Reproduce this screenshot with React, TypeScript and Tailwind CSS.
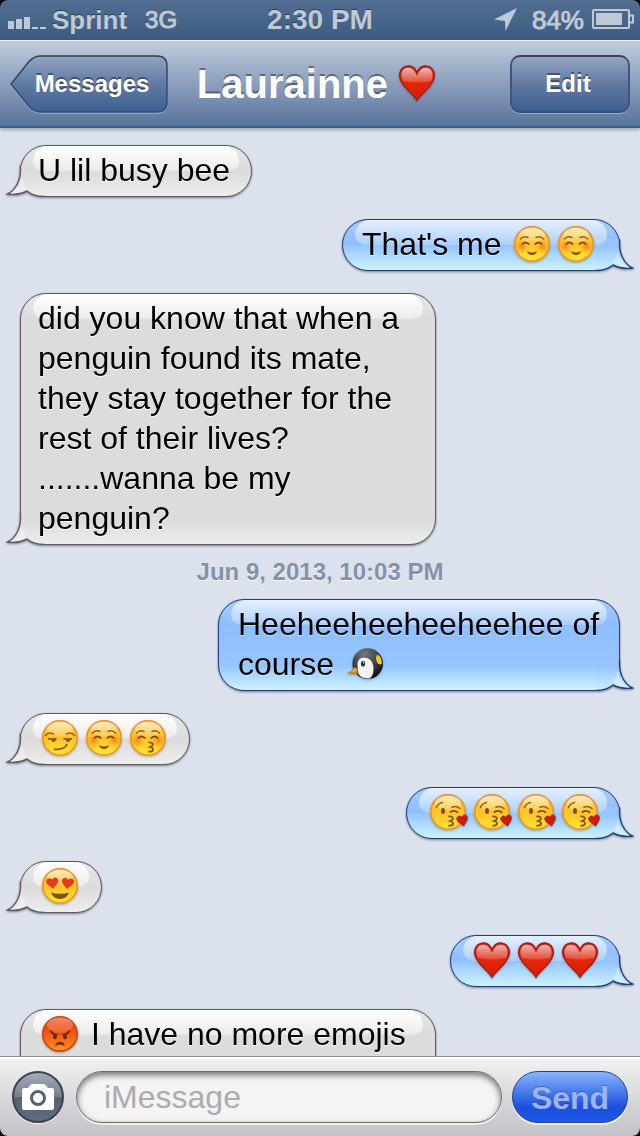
import type { ReactNode } from 'react';
import { clsx } from 'clsx';

type EmojiName = 'blush' | 'smirk' | 'kissing' | 'kissHeart' | 'heartEyes' | 'angry' | 'penguin' | 'heart';

type Message = {
  id: number;
  from: 'me' | 'them';
  size?: string;
  parts: (string | { emoji: EmojiName })[];
};

const e = (emoji: EmojiName) => ({ emoji });

const earlier: Message[] = [
  { id: 1, from: 'them', size: 'w-[232px]', parts: ['U lil busy bee'] },
  { id: 2, from: 'me', size: 'w-[278px]', parts: ["That's me ", e('blush'), e('blush')] },
  {
    id: 3,
    from: 'them',
    size: 'w-[416px]',
    parts: [
      'did you know that when a penguin found its mate, they stay together for the rest of their lives?\n.......wanna be my penguin?',
    ],
  },
];

const later: Message[] = [
  { id: 4, from: 'me', size: 'w-[402px]', parts: ['Heeheeheeheeheehee of course ', e('penguin')] },
  { id: 5, from: 'them', parts: [e('smirk'), e('blush'), e('kissing')] },
  { id: 6, from: 'me', parts: [e('kissHeart'), e('kissHeart'), e('kissHeart'), e('kissHeart')] },
  { id: 7, from: 'them', parts: [e('heartEyes')] },
  { id: 8, from: 'me', parts: [e('heart'), e('heart'), e('heart')] },
  { id: 9, from: 'them', size: 'w-[416px] min-h-[92px]', parts: [e('angry'), ' I have no more emojis'] },
];

const emojiLabels: Record<EmojiName, string> = {
  blush: 'smiling face',
  smirk: 'smirking face',
  kissing: 'kissing face with closed eyes',
  kissHeart: 'face blowing a kiss',
  heartEyes: 'smiling face with heart eyes',
  angry: 'angry face',
  penguin: 'penguin',
  heart: 'red heart',
};

const HEART =
  'M18 35.5C14.500 29 .5 20 .5 10C.5 4.500 4.500 .8 9.500 .8C13.500 .8 16.500 3.500 18 7.500C19.500 3.500 22.500 .8 26.500 .8C31.500 .8 35.500 4.500 35.500 10C35.500 20 21.500 29 18 35.500Z';

// gradients shared by every emoji and bubble tail
function SharedDefs() {
  return (
    <svg className="absolute size-0" aria-hidden="true">
      <defs>
        <linearGradient id="face" x1="0" y1="0" x2="0" y2="1">
          <stop offset="0" stopColor="#ffcf58" />
          <stop offset="0.5" stopColor="#ffc02a" />
          <stop offset="0.75" stopColor="#ffd52a" />
          <stop offset="1" stopColor="#ffe640" />
        </linearGradient>
        <linearGradient id="rim" x1="0" y1="0" x2="0" y2="1">
          <stop offset="0" stopColor="#f48a1e" />
          <stop offset="1" stopColor="#ef9d1e" />
        </linearGradient>
        <linearGradient id="angryFace" x1="0" y1="0" x2="0" y2="1">
          <stop offset="0" stopColor="#e5360c" />
          <stop offset="0.5" stopColor="#f4560f" />
          <stop offset="1" stopColor="#ff9a24" />
        </linearGradient>
        <linearGradient id="shine" x1="0" y1="0" x2="0" y2="1">
          <stop offset="0" stopColor="#fff" stopOpacity="0.8" />
          <stop offset="1" stopColor="#fff" stopOpacity="0.2" />
        </linearGradient>
        <radialGradient id="cheek">
          <stop offset="0" stopColor="#ff7a1a" stopOpacity="0.9" />
          <stop offset="1" stopColor="#ff8a1a" stopOpacity="0" />
        </radialGradient>
        <linearGradient id="heartFill" x1="0" y1="0" x2="0" y2="1">
          <stop offset="0" stopColor="#c4200f" />
          <stop offset="0.5" stopColor="#e52508" />
          <stop offset="1" stopColor="#d41c06" />
        </linearGradient>
        <radialGradient id="penguinHead" cx="0.4" cy="0.2" r="0.8">
          <stop offset="0" stopColor="#747a7e" />
          <stop offset="0.6" stopColor="#383d40" />
          <stop offset="1" stopColor="#0c0e10" />
        </radialGradient>
        <linearGradient id="tailThem" x1="0" y1="0" x2="0" y2="1">
          <stop offset="0.25" stopColor="#dcdcdc" />
          <stop offset="1" stopColor="#ededed" />
        </linearGradient>
        <linearGradient id="tailMe" x1="0" y1="0" x2="0" y2="1">
          <stop offset="0.25" stopColor="#97c5ff" />
          <stop offset="1" stopColor="#ccf3ff" />
        </linearGradient>
      </defs>
    </svg>
  );
}

function Face({ children, angry = false }: { children: ReactNode; angry?: boolean }) {
  return (
    <>
      <circle cx="18" cy="18" r="17.2" fill={angry ? 'url(#angryFace)' : 'url(#face)'} stroke={angry ? '#cf4710' : 'url(#rim)'} strokeWidth="1.7" />
      <ellipse cx="18" cy="9" rx="13" ry="7.5" fill="url(#shine)" opacity={angry ? 0.5 : 0.75} />
      {children}
    </>
  );
}

function ClosedEyes() {
  return (
    <>
      <circle cx="7.5" cy="20.5" r="6.5" fill="url(#cheek)" />
      <circle cx="28.5" cy="20.5" r="6.5" fill="url(#cheek)" />
      <path d="M6.5 13Q9.5 9.5 14 11.5M29.5 13Q26.5 9.5 22 11.5" className="fill-none stroke-[#91601a]" strokeWidth="1.5" strokeLinecap="round" />
      <path d="M8.3 18Q11.5 15 14.7 18M21.3 18Q24.5 15 27.7 18" className="fill-none stroke-[#7d4f12]" strokeWidth="1.8" strokeLinecap="round" />
    </>
  );
}

const kissMouth = (
  <path d="M19 22.3C24 22.3 24 25.500 20 27C24.500 28 24 31.800 19 31.700" className="fill-none stroke-[#8a500c]" strokeWidth="1.7" strokeLinecap="round" />
);

function EmojiShape({ name }: { name: EmojiName }) {
  switch (name) {
    case 'blush':
      return (
        <Face>
          <ClosedEyes />
          <path d="M13 25Q18 28.2 23 25Q22 29 18 29Q14 29 13 25Z" fill="#8a4a08" />
        </Face>
      );
    case 'smirk':
      return (
        <Face>
          <path d="M3.5 15.5Q6.5 11.5 11.5 14M32.5 15.5Q29.5 11.5 24.5 14" className="fill-none stroke-[#91601a]" strokeWidth="1.6" strokeLinecap="round" />
          <path d="M6.5 18.8Q10 19.5 14 18.8M22 18.8Q26 19.5 29.5 18.8" className="fill-none stroke-[#7d4f12]" strokeWidth="1.5" strokeLinecap="round" />
          <path d="M9.5 19H14Q13.5 22 11.5 22Q9.5 22 9.5 19ZM24 19H28.5Q28 22 26 22Q24 22 24 19Z" fill="#7d4f12" />
          <path d="M12.5 29.3Q22.5 30 24.8 24.5" className="fill-none stroke-[#8a500c]" strokeWidth="1.8" strokeLinecap="round" />
        </Face>
      );
    case 'kissing':
      return (
        <Face>
          <ClosedEyes />
          {kissMouth}
        </Face>
      );
    case 'kissHeart':
      return (
        <Face>
          <path d="M6.5 13.5Q8 9.5 12.5 8.5M22 13.3Q26 11.3 30 14.5" className="fill-none stroke-[#91601a]" strokeWidth="1.6" strokeLinecap="round" />
          <ellipse cx="13" cy="17" rx="2" ry="3" fill="#7d4f12" />
          <path d="M20.5 18Q24 15.5 27.5 18.3" className="fill-none stroke-[#7d4f12]" strokeWidth="1.8" strokeLinecap="round" />
          {kissMouth}
          <path d={HEART} transform="translate(26 22.5) rotate(-12) scale(.31)" fill="#cc1c12" stroke="#96100a" strokeWidth="2" />
        </Face>
      );
    case 'heartEyes':
      return (
        <Face>
          <path d={HEART} transform="translate(4 11) rotate(-8) scale(.33 .29)" fill="#e63c1e" stroke="#c0300e" strokeWidth="2" />
          <path d={HEART} transform="translate(20.5 9.5) rotate(8) scale(.33 .29)" fill="#e63c1e" stroke="#c0300e" strokeWidth="2" />
          <path d="M9 24.5Q18 27 27 24.5Q25 31 18 31Q11 31 9 24.5Z" fill="#87500c" />
        </Face>
      );
    case 'angry':
      return (
        <Face angry>
          <path d="M8.5 15Q10.5 18.5 15.5 18.5M27.5 15Q25.5 18.5 20.5 18.5" className="fill-none stroke-[#6e2808]" strokeWidth="1.7" strokeLinecap="round" />
          <ellipse cx="13" cy="20.5" rx="1.9" ry="2.7" fill="#6e2808" />
          <ellipse cx="23" cy="20.5" rx="1.9" ry="2.7" fill="#6e2808" />
          <path d="M13.5 29.5Q14 26 18 26Q22 26 22.5 29.5Q18 26.8 13.5 29.5Z" fill="#6e2808" stroke="#6e2808" strokeWidth="0.6" />
        </Face>
      );
    case 'penguin':
      return (
        <>
          <circle cx="20.7" cy="17.6" r="15.3" fill="url(#penguinHead)" />
          <path d="M30 8.5Q34.5 10 35 17.5Q32.5 19.5 30.5 17Q28 13 30 8.5Z" fill="#e6cf1c" />
          <path d="M10.500 19C10.500 13 14 11.500 18 11.800C25 12.500 26.500 19 26.500 23C26.500 28 25 31 22.500 32.500Q15 33 11.500 28Q10.500 24 10.500 19Z" fill="#f4f4f4" />
          <ellipse cx="16" cy="17.7" rx="2.1" ry="2.8" fill="#2b2f31" />
          <circle cx="16.5" cy="16.8" r="0.7" fill="#fff" />
          <path d="M0 27.3Q5 25 7.500 21Q11.500 22 10.500 28Q5 28.500 0 27.300Z" fill="#c9810f" />
          <path d="M2 26.8Q6 25 8 22Q10 23 10 25Q6 27 2 26.800Z" fill="#eda837" />
        </>
      );
    case 'heart':
      return (
        <>
          <path d={HEART} fill="url(#heartFill)" stroke="#a31a10" strokeWidth="1.2" />
          <path
            d="M2.500 10C2.500 5.500 5 2.800 9.500 2.800C13.500 2.800 16 6 18 11C20 6 22.500 2.800 26.500 2.800C31 2.800 33.500 5.500 33.500 10C33.500 12 33 14 32 16Q18 19 4 16C3 14 2.500 12 2.500 10Z"
            fill="url(#shine)"
            opacity="0.85"
          />
        </>
      );
  }
}

function Emoji({ name, className = 'mx-1 align-[-7px]' }: { name: EmojiName; className?: string }) {
  return (
    <svg viewBox="0 0 36 36" role="img" aria-label={emojiLabels[name]} className={clsx('inline-block size-9 overflow-visible drop-shadow-[0_1px_1px_rgba(0,0,0,0.25)]', className)}>
      <EmojiShape name={name} />
    </svg>
  );
}

function Tail({ mine }: { mine: boolean }) {
  return (
    <svg
      viewBox="0 0 38 32"
      aria-hidden="true"
      className={clsx('absolute -bottom-px h-8 w-[38px]', mine ? '-right-[15px] -scale-x-100' : '-left-[15px]')}
    >
      <path
        d="M14.5 0V5C14.5 15 10 25 1.5 29C9 30 16 28.500 21 26C26 30 31 31.500 38 31.500V0Z"
        fill={mine ? 'url(#tailMe)' : 'url(#tailThem)'}
      />
      <path d="M16 12C15.500 20 11 26 6 28.500Q14 27.500 20 23Z" fill="#fff" opacity="0.35" />
      <path
        d="M14.5 0V5C14.5 15 10 25 1.5 29C9 30 16 28.500 21 26C26 30 31 31.500 38 31.500"
        className={clsx('fill-none', mine ? 'stroke-[#233f80]' : 'stroke-[#5c5c5c]')}
        strokeWidth="1.4"
      />
    </svg>
  );
}

function Bubble({ message }: { message: Message }) {
  const mine = message.from === 'me';

  return (
    <li className={clsx('flex px-5', mine ? 'justify-end' : 'justify-start')}>
      <div
        className={clsx(
          'relative max-w-full rounded-[26px] border pt-1 pb-[6px] drop-shadow-[0_1px_1px_rgba(0,0,0,0.45)]',
          mine
            ? 'border-[#233f80] bg-[linear-gradient(to_bottom,#a6cbfd_0,#8dbefe_24px,#97c5ff_calc(100%-24px),#ccf3ff_100%)] pr-[17px] pl-[19px]'
            : 'border-[#5c5c5c] bg-[linear-gradient(to_bottom,#e6e6e6_0,#dcdcdc_24px,#dcdcdc_calc(100%-24px),#ededed_100%)] pr-[19px] pl-[17px]',
          message.size,
        )}
      >
        <Tail mine={mine} />
        <span
          className={clsx(
            'absolute inset-x-3 top-0 h-[25px] rounded-t-[18px] rounded-b-[12px] bg-linear-to-b',
            mine ? 'from-white/70 to-white/25' : 'from-white to-white/40',
          )}
        />
        <p className={clsx('relative text-[32px] leading-10 whitespace-pre-line text-black', mine ? '[text-shadow:0_1px_0_rgba(255,255,255,0.5)]' : '[text-shadow:0_1px_0_#fff]')}>
          {message.parts.map((part, i) => (typeof part === 'string' ? part : <Emoji key={i} name={part.emoji} />))}
        </p>
      </div>
    </li>
  );
}

function StatusBar() {
  return (
    <div className="bg-black">
      <div className="grid h-10 grid-cols-[1fr_auto_1fr] items-center rounded-t-lg bg-linear-to-b from-[#526f92] to-[#3d5b82] px-2 text-[26px] leading-10 text-[#bfcad6] [text-shadow:0_-1px_0_rgba(0,0,0,0.45)]">
        <div className="flex items-center">
          <svg viewBox="0 0 38 18" className="mt-[2px] h-[18px] w-[38px] fill-[#bfcad6]" role="img" aria-label="Signal: 3 of 5 bars">
            <path d="M0 9H6V17H0ZM8 7H14V17H8ZM16 5H22V17H16ZM24 15H30V17H24ZM32 15H38V17H32Z" />
          </svg>
          <span className="ml-[6px] font-bold">Sprint</span>
          <span className="ml-[18px] text-[24px] [-webkit-text-stroke:1px_#bfcad6]">3G</span>
        </div>
        <span className="text-[28px] font-bold">2:30 PM</span>
        <div className="flex items-center justify-end">
          <svg viewBox="0 0 24 24" className="mr-[14px] size-6 fill-[#bfcad6]" role="img" aria-label="Location in use">
            <path d="M23 0L11.5 23L11 13L0 11.5Z" />
          </svg>
          <span className="mr-2 [-webkit-text-stroke:1px_#bfcad6]">84%</span>
          <svg viewBox="0 0 42 22" className="-mr-[2px] h-[22px] w-[42px]" role="img" aria-label="Battery 84%">
            <rect x="1" y="1" width="36" height="18" rx="1" className="fill-none stroke-[#bfcad6]" strokeWidth="2" />
            <rect x="4" y="4" width="26" height="12" className="fill-[#bfcad6]" />
            <path d="M38 6.5H41V13.5H38" className="fill-none stroke-[#bfcad6]" strokeWidth="2" />
          </svg>
        </div>
      </div>
    </div>
  );
}

function NavBar() {
  return (
    <header className="relative z-10 grid h-[88px] grid-cols-[1fr_auto_1fr] items-center border-t border-b-2 border-t-[#e6edf5] border-b-[#3f5c88] bg-linear-to-b from-[#c0cddd] via-[#8d9fbd] to-[#58739a] px-[10px] shadow-[0_2px_3px_rgba(0,0,0,0.25)]">
      <button type="button" className="relative h-[58px] w-[158px] justify-self-start pl-[6px] text-2xl font-bold text-white [text-shadow:0_-2px_0_rgba(0,0,0,0.4)]">
        <svg viewBox="0 0 158 58" className="absolute inset-0 size-full drop-shadow-[0_1px_0_rgba(255,255,255,0.35)]" aria-hidden="true">
          <defs>
            <linearGradient id="backFill" x1="0" y1="0" x2="0" y2="1">
              <stop offset="0" stopColor="#93a5c1" />
              <stop offset="0.5" stopColor="#617aa3" />
              <stop offset="1" stopColor="#3f5f8f" />
            </linearGradient>
            <linearGradient id="backEdge" x1="0" y1="0" x2="0" y2="1">
              <stop offset="0" stopColor="#333d4d" />
              <stop offset="1" stopColor="#2f4e80" />
            </linearGradient>
          </defs>
          <path d="M1 29L19 6.5Q24 1 31 1H147Q157 1 157 11V47Q157 57 147 57H31Q24 57 19 51.5Z" fill="url(#backFill)" stroke="url(#backEdge)" strokeWidth="1.5" />
        </svg>
        <span className="relative">Messages</span>
      </button>
      <h1 className="text-[40px] leading-[48px] font-bold text-white [text-shadow:0_-2px_0_rgba(0,0,0,0.4)]">
        Laurainne <Emoji name="heart" className="mr-2 align-[-3px]" />
      </h1>
      <button type="button" className="h-[58px] w-[120px] justify-self-end rounded-[10px] border-2 border-t-[#38445a] border-r-[#3f557c] border-b-[#34527f] border-l-[#3f557c] bg-linear-to-b from-[#93a5c1] via-[#617aa3] to-[#3f5f8f] pr-1 text-2xl font-bold text-white shadow-[0_1px_0_rgba(255,255,255,0.35)] [text-shadow:0_-2px_0_rgba(0,0,0,0.4)]">
        Edit
      </button>
    </header>
  );
}

function Composer() {
  return (
    <div className="relative z-10 bg-black">
      <form
        className="flex h-20 items-center gap-[10px] rounded-b-lg border-t border-t-[#8f8f93] bg-linear-to-b from-[#f2f2f3] to-[#c2c2c7] px-3 pt-px shadow-[inset_0_2px_0_#fff]"
        onSubmit={(event) => event.preventDefault()}
      >
        <button
          type="button"
          aria-label="Attach photo"
          className="grid size-[52px] shrink-0 place-items-center rounded-full border-2 border-[#3a424e] bg-[linear-gradient(to_bottom,#a3abb7_0,#747f8f_50%,#566273_50%,#5f6c7c_100%)] shadow-[0_1px_0_#fff]"
        >
          <svg viewBox="0 0 32 26" className="h-[26px] w-8" aria-hidden="true">
            <path d="M2 4H6L8.5 1Q9.5 0 11 0H21Q22.500 0 23.500 1L26 4H30Q32 4 32 6V24Q32 26 30 26H2Q0 26 0 24V6Q0 4 2 4Z" fill="#fff" />
            <circle cx="16" cy="14" r="6.5" fill="#fff" stroke="#566273" strokeWidth="3" />
          </svg>
        </button>
        <input
          type="text"
          aria-label="iMessage"
          placeholder="iMessage"
          className="ml-[2px] h-[52px] min-w-0 flex-1 rounded-full border border-[#6b6b6b] bg-[#f4f4f4] px-[27px] text-[32px] text-black shadow-[inset_0_3px_6px_rgba(0,0,0,0.55),0_2px_0_rgba(255,255,255,0.7)] outline-none placeholder:text-[#acacac]"
        />
        <button
          type="submit"
          className="h-[52px] w-[116px] shrink-0 rounded-full border border-[#27408f] bg-[linear-gradient(to_bottom,#8ab4fb_0,#4f83ee_35%,#1e4ede_70%,#1a5ae6_100%)] pt-[2px] text-[32px] leading-none font-bold text-[#9db5ef] shadow-[0_2px_0_rgba(255,255,255,0.7)] [text-shadow:0_-1px_0_rgba(0,0,0,0.25)]"
        >
          Send
        </button>
      </form>
    </div>
  );
}

export default function App() {
  return (
    <main className="flex h-screen flex-col overflow-hidden bg-[#dbe1ed] font-['Liberation_Sans',Arial,sans-serif]">
      <SharedDefs />
      <StatusBar />
      <NavBar />
      <section aria-label="Conversation" className="min-h-0 flex-1 overflow-hidden pt-[17px]">
        <ul className="flex flex-col gap-[22px]">
          {earlier.map((message) => (
            <Bubble key={message.id} message={message} />
          ))}
        </ul>
        <time dateTime="2013-06-09T22:03" className="flex h-[54px] items-center justify-center text-2xl font-bold text-[#8591a9] [text-shadow:0_1px_0_#fff]">
          Jun 9, 2013, 10:03 PM
        </time>
        <ul className="flex flex-col gap-[22px]">
          {later.map((message) => (
            <Bubble key={message.id} message={message} />
          ))}
        </ul>
      </section>
      <Composer />
    </main>
  );
}
